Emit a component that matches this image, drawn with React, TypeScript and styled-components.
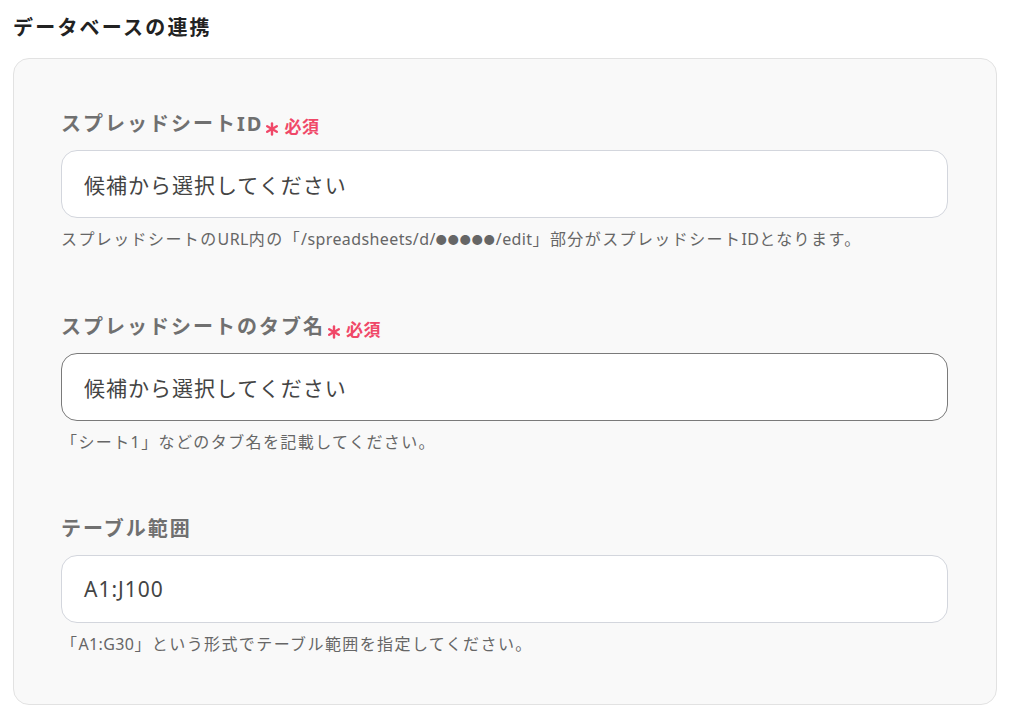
import type { ReactNode } from 'react';
import styled, { createGlobalStyle } from 'styled-components';

const GlobalStyle = createGlobalStyle`
  body {
    margin: 0;
    background: #ffffff;
    font-family: "Noto Sans", "Noto Sans CJK JP", sans-serif;
  }
`;

const Page = styled.div`
  padding: 13px 13px 0 13px;
  width: 1010px;
  box-sizing: border-box;
`;

const Title = styled.h2`
  margin: 0 0 15px 0;
  font-size: 20px;
  line-height: 30px;
  font-weight: 700;
  letter-spacing: 2.2px;
  color: #222222;
`;

const Card = styled.section`
  background: #f9f9f9;
  border: 1px solid #e2e2e2;
  border-radius: 16px;
  padding: 48px 48px 49px 47px;
  display: flex;
  flex-direction: column;
  gap: 59px;
`;

const Field = styled.div`
  display: flex;
  flex-direction: column;
`;

const Label = styled.div`
  display: flex;
  align-items: center;
  height: 30px;
  font-size: 20px;
  font-weight: 700;
  letter-spacing: 2px;
  color: #707070;
`;

const Required = styled.span`
  display: inline-flex;
  align-items: flex-end;
  gap: 5px;
  margin-left: 2px;
  color: #f04868;
  font-size: 17px;
  font-weight: 700;
  letter-spacing: 0.5px;
  padding-top: 6px;
`;

const AsteriskIcon = () => (
  <svg width="14" height="14" viewBox="0 0 14 14" style={{ marginBottom: 2 }}>
    <g stroke="#f04868" strokeWidth="2.4" strokeLinecap="round">
      <line x1="7" y1="1.5" x2="7" y2="12.5" />
      <line x1="2.2" y1="4.2" x2="11.8" y2="9.8" />
      <line x1="2.2" y1="9.8" x2="11.8" y2="4.2" />
    </g>
  </svg>
);

const Input = styled.div<{ $active?: boolean }>`
  margin-top: 13px;
  height: 68px;
  box-sizing: border-box;
  background: #ffffff;
  border: 1px solid ${p => (p.$active ? '#7a7a7a' : '#d3d6dd')};
  border-radius: 16px;
  padding: 0 22px;
  display: flex;
  align-items: center;
  font-size: 21px;
  letter-spacing: 1px;
  color: #444444;
`;

const Hint = styled.div`
  margin-top: 10px;
  line-height: 22px;
  font-size: 16px;
  letter-spacing: 1.4px;
  color: #666666;
`;

const Latin = styled.span`
  letter-spacing: 0.4px;
`;

const Dots = styled.span`
  font-size: 11px;
  letter-spacing: 1px;
  vertical-align: 1px;
`;

type FieldData = {
  label: string;
  required: boolean;
  value: string;
  hint: ReactNode;
  active?: boolean;
};

const fields: FieldData[] = [
  {
    label: 'スプレッドシートID',
    required: true,
    value: '候補から選択してください',
    hint: (
      <>
        スプレッドシートの<Latin>URL</Latin>内の「<Latin>/spreadsheets/d/</Latin>
        <Dots>●●●●●</Dots>
        <Latin>/edit</Latin>」部分がスプレッドシート<Latin>ID</Latin>となります。
      </>
    ),
  },
  {
    label: 'スプレッドシートのタブ名',
    required: true,
    value: '候補から選択してください',
    hint: '「シート1」などのタブ名を記載してください。',
    active: true,
  },
  {
    label: 'テーブル範囲',
    required: false,
    value: 'A1:J100',
    hint: (
      <>
        「<Latin>A1:G30</Latin>」という形式でテーブル範囲を指定してください。
      </>
    ),
  },
];

const App = () => {
  return (
    <Page>
      <GlobalStyle />
      <Title>データベースの連携</Title>
      <Card>
        {fields.map(f => (
          <Field key={f.label}>
            <Label>
              {f.label}
              {f.required && (
                <Required>
                  <AsteriskIcon />
                  必須
                </Required>
              )}
            </Label>
            <Input $active={f.active}>{f.value}</Input>
            <Hint>{f.hint}</Hint>
          </Field>
        ))}
      </Card>
    </Page>
  );
};

export default App;
